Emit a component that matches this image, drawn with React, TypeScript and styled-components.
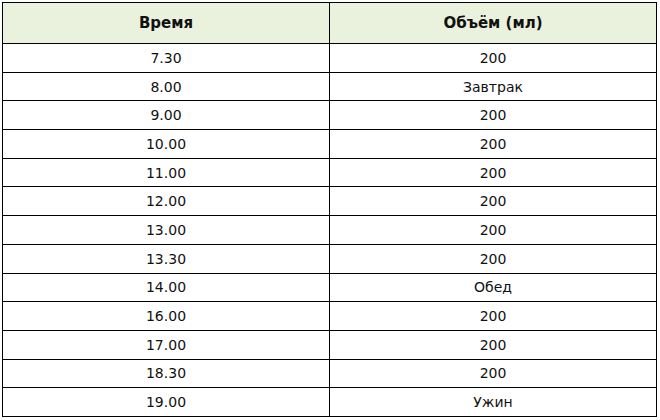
import styled, { createGlobalStyle } from "styled-components";

const GlobalStyle = createGlobalStyle`
  html, body {
    margin: 0;
    padding: 0;
    background: #ffffff;
  }
`;

const Page = styled.div`
  padding: 2px 0 0 2px;
`;

const Table = styled.table`
  width: 655px;
  border-collapse: collapse;
  table-layout: fixed;
  font-family: "DejaVu Sans", Verdana, sans-serif;
  font-size: 14px;
  color: #111111;
`;

const HeadCell = styled.th`
  height: 40px;
  padding: 0;
  border: 1px solid #000000;
  background: #eaf1dd;
  font-size: 15px;
  font-weight: 700;
  text-align: center;
  vertical-align: middle;
`;

const Cell = styled.td`
  height: 27.7px;
  padding: 0;
  border: 1px solid #000000;
  text-align: center;
  vertical-align: middle;
`;

const rows: [string, string][] = [
  ["7.30", "200"],
  ["8.00", "Завтрак"],
  ["9.00", "200"],
  ["10.00", "200"],
  ["11.00", "200"],
  ["12.00", "200"],
  ["13.00", "200"],
  ["13.30", "200"],
  ["14.00", "Обед"],
  ["16.00", "200"],
  ["17.00", "200"],
  ["18.30", "200"],
  ["19.00", "Ужин"],
];

export default function App() {
  return (
    <Page>
      <GlobalStyle />
      <Table>
        <thead>
          <tr>
            <HeadCell>Время</HeadCell>
            <HeadCell>Объём (мл)</HeadCell>
          </tr>
        </thead>
        <tbody>
          {rows.map(([time, volume]) => (
            <tr key={time}>
              <Cell>{time}</Cell>
              <Cell>{volume}</Cell>
            </tr>
          ))}
        </tbody>
      </Table>
    </Page>
  );
}
